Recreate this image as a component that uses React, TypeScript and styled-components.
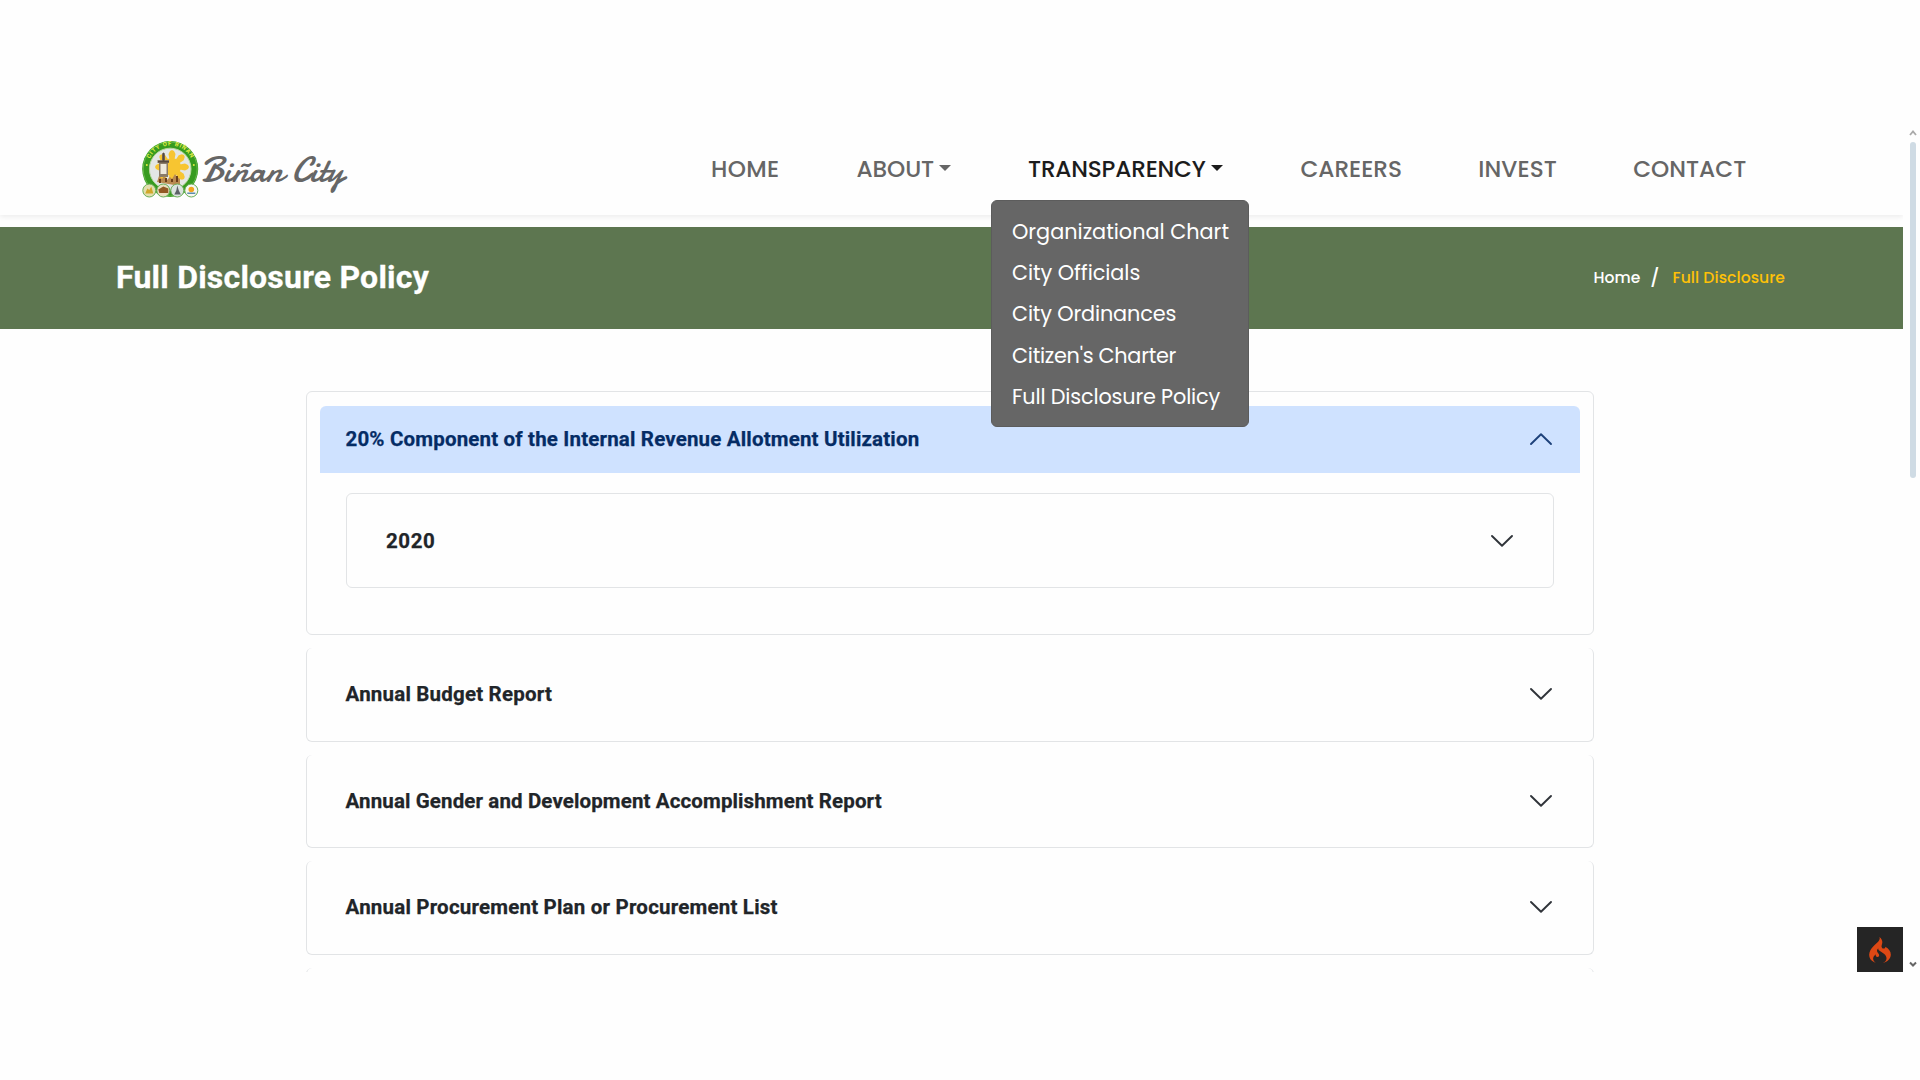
import React from "react";
import styled, { createGlobalStyle } from "styled-components";
import { SiCodeigniter } from "react-icons/si";

const Global = createGlobalStyle`
  *, *::before, *::after { box-sizing: border-box; }
  body { margin: 0; background: #fefefe; overflow: hidden; }
`;

const display = `"Poppins", "Inter", "Liberation Sans", sans-serif`;
const body = `"Roboto", "Liberation Sans", sans-serif`;

const Screen = styled.div`
  width: 1920px;
  height: 1080px;
  padding: 123px 0 108px;
  display: flex;
  background: #fefefe;
  font-family: ${body};
`;

const Viewport = styled.main`
  position: relative;
  width: 1903px;
  height: 849px;
  overflow: hidden;
`;

const Navbar = styled.header`
  position: relative;
  z-index: 2;
  height: 92px;
  padding-left: 142px;
  display: flex;
  align-items: center;
  background: #fefefe;
  box-shadow: 0 2px 5px rgba(0, 0, 0, 0.07);
`;

const Brand = styled.a`
  width: 569px;
  padding-top: 1px;
  display: flex;
  align-items: center;
  gap: 2px;
`;

const BrandName = styled.span`
  font: 400 37.5px/44px "Damion", "Lato", "Liberation Sans", sans-serif;
  color: #666;
  transform: scaleX(0.965);
  transform-origin: left center;
  white-space: nowrap;
`;

const Nav = styled.nav`
  display: flex;
`;

const NavItem = styled.div<{ $width: number }>`
  position: relative;
  flex: 0 0 ${(p) => p.$width}px;
  height: 30px;
  display: flex;
  align-items: center;
`;

const NavLink = styled.a<{ $active?: boolean; $tracking: number }>`
  font: 500 23.2px/30px ${display};
  letter-spacing: ${(p) => p.$tracking}px;
  color: ${(p) => (p.$active ? "#1c1c1c" : "#666")};
  display: flex;
  align-items: center;
  white-space: nowrap;
`;

const Caret = styled.i`
  margin: -2px 0 0 5px;
  border: 6px solid transparent;
  border-top-color: currentColor;
  border-bottom: 0;
`;

const Menu = styled.div`
  position: absolute;
  left: -37px;
  top: 46px;
  width: 258px;
  padding: 9.9px 0 9.5px 20px;
  border-radius: 6px;
  border: 1px solid #5c5c5c;
  background: #666;
`;

const MenuLink = styled.a<{ $tracking: number }>`
  display: block;
  font: 400 20.8px/41.2px ${display};
  letter-spacing: ${(p) => p.$tracking}px;
  color: #fff;
  white-space: nowrap;
`;

const Banner = styled.section`
  height: 102.3px;
  margin-top: 12px;
  padding: 0 118px 2px 116px;
  display: flex;
  align-items: center;
  justify-content: space-between;
  background: #5d7650;
`;

const PageTitle = styled.h1`
  margin: 0;
  font: 700 32px/40px ${body};
  letter-spacing: 0.22px;
  color: #fff;
  -webkit-text-stroke: 0.3px currentColor;
`;

const Crumbs = styled.div`
  padding-top: 2px;
  display: flex;
  align-items: center;
  font: 500 15.6px/22px ${display};
  color: #fff;
`;

const Crumb = styled.a<{ $current?: boolean }>`
  letter-spacing: ${(p) => (p.$current ? 0.07 : 0)}px;
  color: ${(p) => (p.$current ? "#ffc107" : "#fff")};
`;

const Slash = styled.span`
  margin: 0 13px 0 10px;
  font-size: 18px;
`;

const Accordion = styled.section`
  width: 1288px;
  margin: 62px 0 0 306px;
  display: flex;
  flex-direction: column;
  gap: 12.8px;
`;

const OpenCard = styled.article`
  flex: none;
  height: 244px;
  padding: 13.5px 13.5px 13.5px 13px;
  border: 1px solid #e2e4e6;
  border-radius: 6px;
`;

const Row = styled.div`
  display: flex;
  align-items: center;
  justify-content: space-between;
`;

const OpenHeader = styled(Row)`
  height: 67px;
  padding: 0 27px 0 25.5px;
  border-radius: 6px 6px 0 0;
  background: #cfe2ff;
  color: #052c65;
`;

const InnerCard = styled(Row)`
  height: 94.5px;
  margin: 20.5px 25.5px 0 25.5px;
  padding: 0 39px 0 39.5px;
  border: 1px solid #e2e4e6;
  border-radius: 6px;
  color: #212529;
`;

const ClosedCard = styled(Row)`
  flex: none;
  height: 93.7px;
  padding: 0 40.5px 0 38.5px;
  border: 1px solid #e2e4e6;
  border-top: 0;
  border-radius: 6px;
  color: #212529;
`;

const CardTitle = styled.h2<{ $tracking: number }>`
  margin: 0;
  font: 700 20.5px/26px ${body};
  letter-spacing: ${(p) => p.$tracking}px;
  -webkit-text-stroke: 0.25px currentColor;
`;

const ChevronSvg = styled.svg<{ $up?: boolean }>`
  width: 24px;
  height: 24px;
  transform: ${(p) => (p.$up ? "rotate(180deg)" : "none")};
`;

const DebugButton = styled.button`
  position: absolute;
  right: 0;
  bottom: 0;
  width: 46px;
  height: 45px;
  padding: 0;
  border: 0;
  display: grid;
  place-items: center;
  background: #252525;
  color: #dd4814;
`;

const Scrollbar = styled.aside`
  width: 17px;
  height: 849px;
  padding: 6px 0 4px 3px;
  display: flex;
  flex-direction: column;
  align-items: center;
`;

const Thumb = styled.div`
  width: 6px;
  height: 336px;
  margin: 5px 1px auto 0;
  border-radius: 3px;
  background: #cfdbe4;
`;

const ArrowSvg = styled.svg`
  width: 8px;
  height: 8px;
`;

const Chevron = ({ up, color = "#30343a" }: { up?: boolean; color?: string }) => (
  <ChevronSvg $up={up} viewBox="0 0 24 24" fill="none">
    <path d="M2 7 12 16.800 22 7" stroke={color} strokeWidth="1.9" strokeLinecap="round" strokeLinejoin="round" />
  </ChevronSvg>
);

const Seal = () => (
  <svg width="57" height="60" viewBox="0 0 57 60">
    <defs>
      <path id="sealArc" d="M6.2 33A22.8 22.8 0 1 1 50.8 33" />
    </defs>
    <circle cx="28.2" cy="29" r="28" fill="#379b20" />
    <circle cx="28.2" cy="29" r="27" fill="none" stroke="#66b94b" strokeWidth="1" />
    <circle cx="28.2" cy="29" r="20.8" fill="#e3e6e4" stroke="#b9d99d" />
    <text fontFamily="Roboto, sans-serif" fontWeight="700" fontSize="5.8" letterSpacing="0.9" fill="#e4ee45">
      <textPath href="#sealArc" startOffset="50%" textAnchor="middle">CITY OF BIÑAN</textPath>
    </text>
    <g fill="#f7c531">
      {[0, 45, 90, 135, 180, 225, 270, 315].map((a) => (
        <path key={a} d="M29 27 26.5 14 28 11 30 10 32 11 33.5 14 31 27Z" transform={`rotate(${a} 30 27)`} />
      ))}
      <circle cx="30" cy="27" r="9" />
    </g>
    <path d="M20 15l1.5-3L23 15v5h4v3h-1v14H17V23h-1.500v-3H20z" fill="#8a7b68" />
    <path d="M18.500 24h6v10h-6z" fill="#eee9dc" />
    <path d="M20.500 13h2v9h-2zM16 21h11v1.500H16z" fill="#56483d" />
    <path d="M15 42l2-6 3 3 2-3 3 4 3-3 2 2 3-5 2 3 3 2v7z" fill="#b98a50" />
    <path d="M17 39h2v4h-2zM23 38h2v4h-2zM29 39h2v3h-2zM34 36h2v6h-2z" fill="#6b3e18" />
    <circle cx="4.800" cy="25" r="1" fill="#e4ee45" />
    <circle cx="51.800" cy="25" r="1" fill="#e4ee45" />
    {[7.3, 21.3, 35.3, 49.3].map((x, i) => (
      <g key={x}>
        <circle cx={x} cy="50.500" r="6.500" fill={["#e2dfae", "#eadfbe", "#dbe3df", "#f7f7f0"][i]} stroke="#6aae58" strokeWidth="1" />
        {i === 0 && <path d={`M${x - 4} 53.500l2-5 2 1.500 2-3.500 2 7z`} fill="#d1a72a" />}
        {i === 1 && <path d={`M${x - 5} 49.500l5-3 5 2v4.500h-9z`} fill="#925923" />}
        {i === 2 && <path d={`M${x - 3} 54.500l2-4 1-5 1.500 5 2 4z`} fill="#5d6268" />}
        {i === 3 && <><circle cx={x} cy="49.500" r="2.800" fill="#f2a51e" /><path d={`M${x - 4} 52.500h8v1.500h-8z`} fill="#5b8cae" /></>}
      </g>
    ))}
  </svg>
);

const menu: [string, number][] = [
  ["Organizational Chart", 0],
  ["City Officials", -0.05],
  ["City Ordinances", -0.15],
  ["Citizen's Charter", -0.27],
  ["Full Disclosure Policy", -0.16],
];

const nav = [
  { label: "HOME", width: 145.5, tracking: 0.35 },
  { label: "ABOUT", width: 171.5, tracking: -0.1, caret: true },
  { label: "TRANSPARENCY", width: 272.5, tracking: -0.2, caret: true, active: true },
  { label: "CAREERS", width: 177.7, tracking: -0.05 },
  { label: "INVEST", width: 155, tracking: 0.1 },
  { label: "CONTACT", width: 120, tracking: 0 },
];

const reports: [string, number][] = [
  ["Annual Budget Report", 0.2],
  ["Annual Gender and Development Accomplishment Report", 0.12],
  ["Annual Procurement Plan or Procurement List", 0.2],
  ["", 0],
];

export default function App() {
  return (
    <Screen>
      <Global />
      <Viewport>
        <Navbar>
          <Brand>
            <Seal />
            <BrandName>Biñan City</BrandName>
          </Brand>
          <Nav>
            {nav.map((n) => (
              <NavItem key={n.label} $width={n.width}>
                <NavLink $active={n.active} $tracking={n.tracking}>
                  {n.label}
                  {n.caret && <Caret />}
                </NavLink>
                {n.active && (
                  <Menu>
                    {menu.map(([label, tracking]) => (
                      <MenuLink key={label} $tracking={tracking}>{label}</MenuLink>
                    ))}
                  </Menu>
                )}
              </NavItem>
            ))}
          </Nav>
        </Navbar>
        <Banner>
          <PageTitle>Full Disclosure Policy</PageTitle>
          <Crumbs>
            <Crumb>Home</Crumb>
            <Slash>/</Slash>
            <Crumb $current>Full Disclosure</Crumb>
          </Crumbs>
        </Banner>
        <Accordion>
          <OpenCard>
            <OpenHeader>
              <CardTitle $tracking={0.17}>20% Component of the Internal Revenue Allotment Utilization</CardTitle>
              <Chevron up color="#1d417a" />
            </OpenHeader>
            <InnerCard>
              <CardTitle $tracking={0.6}>2020</CardTitle>
              <Chevron />
            </InnerCard>
          </OpenCard>
          {reports.map(([title, tracking]) => (
            <ClosedCard key={title}>
              {title && <CardTitle $tracking={tracking}>{title}</CardTitle>}
              {title && <Chevron />}
            </ClosedCard>
          ))}
        </Accordion>
        <DebugButton aria-label="Debug toolbar">
          <SiCodeigniter size={26} />
        </DebugButton>
      </Viewport>
      <Scrollbar>
        <ArrowSvg viewBox="0 0 8 8" fill="none"><path d="M1 6 4 2.500 7 6" stroke="#aaa" strokeWidth="1.800" /></ArrowSvg>
        <Thumb />
        <ArrowSvg viewBox="0 0 8 8" fill="none"><path d="M1 2.500 4 5.500 7 2.500" stroke="#666" strokeWidth="2" /></ArrowSvg>
      </Scrollbar>
    </Screen>
  );
}
